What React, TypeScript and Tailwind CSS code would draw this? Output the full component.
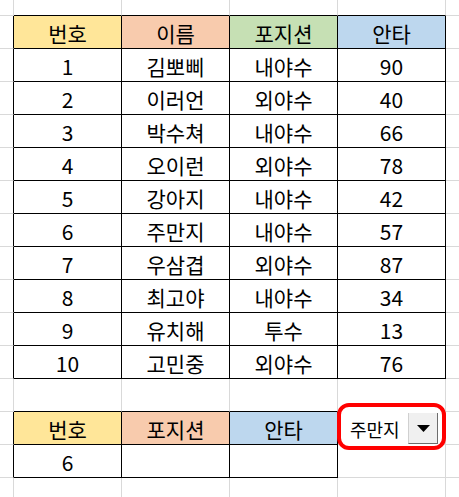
import React from "react";

const FONT = { fontFamily: '"Noto Sans CJK KR", "Noto Sans", sans-serif' };

type Cell = { text?: string; bg?: string };

// sheet rows; col 0 is the thin sliver left of the tables, col 5 is the sliver on the right
const players = [
  ["1", "김뽀삐", "내야수", "90"],
  ["2", "이러언", "외야수", "40"],
  ["3", "박수쳐", "내야수", "66"],
  ["4", "오이런", "외야수", "78"],
  ["5", "강아지", "내야수", "42"],
  ["6", "주만지", "내야수", "57"],
  ["7", "우삼겹", "외야수", "87"],
  ["8", "최고야", "내야수", "34"],
  ["9", "유치해", "투수", "13"],
  ["10", "고민중", "외야수", "76"],
];

const YELLOW = "bg-[#ffe699]";
const ORANGE = "bg-[#f8cbad]";
const GREEN = "bg-[#c6e0b4]";
const BLUE = "bg-[#bdd7ee]";

const rows: Cell[][] = [
  [],
  [
    { text: "번호", bg: YELLOW },
    { text: "이름", bg: ORANGE },
    { text: "포지션", bg: GREEN },
    { text: "안타", bg: BLUE },
  ],
  ...players.map((p) => p.map((t) => ({ text: t }))),
  [],
  [
    { text: "번호", bg: YELLOW },
    { text: "포지션", bg: ORANGE },
    { text: "안타", bg: BLUE },
  ],
  [{ text: "6" }, {}, {}],
  [],
];

// which cells belong to a bordered table
const inTable = (r: number, c: number) => {
  if (c < 1) return false;
  if (r >= 1 && r <= 11) return c <= 4;
  if (r === 13 || r === 14) return c <= 3;
  return false;
};

const colWidths = ["w-[14px]", "w-[108px]", "w-[108px]", "w-[108px]", "w-[108px]", "w-[40px]"];

const SheetCell: React.FC<{ r: number; c: number }> = ({ r, c }) => {
  const cell = c >= 1 && c <= 4 ? rows[r][c - 1] : undefined;
  const rightBlack = inTable(r, c) || inTable(r, c + 1);
  const bottomBlack = inTable(r, c) || inTable(r + 1, c);
  return (
    <div
      className={`flex-shrink-0 h-full flex items-center justify-center border-r border-b text-[21px] leading-none text-black pt-[2px] ${
        colWidths[c]
      } ${rightBlack ? "border-r-black" : "border-r-[#d9d9d9]"} ${
        bottomBlack ? "border-b-black" : "border-b-[#d9d9d9]"
      } ${cell?.bg ?? "bg-white"}`}
    >
      {cell?.text}
    </div>
  );
};

const App: React.FC = () => {
  return (
    <div className="relative w-[459px] h-[497px] overflow-hidden bg-white" style={FONT}>
      {rows.map((_, r) => (
        <div key={r} className={`flex ${r === 0 ? "h-[16px]" : "h-[33px]"}`}>
          {[0, 1, 2, 3, 4, 5].map((c) => (
            <SheetCell key={c} r={r} c={c} />
          ))}
        </div>
      ))}

      {/* combo box with red highlight */}
      <div className="absolute left-[337px] top-[403px] w-[109px] h-[47px] border-4 border-[#ff0000] rounded-[12px] bg-white pl-[4px] pt-[6px]">
        <div className="flex w-[93px] h-[31px] bg-white">
          <div className="flex-1 flex items-center pl-[5px] text-[18px] leading-none text-black">
            주만지
          </div>
          <div className="w-[30px] h-full flex items-center justify-center bg-[#f0f0f0] border-l border-l-[#d0d0d0] border-r border-r-[#6d6d6d] border-b border-b-[#6d6d6d]">
            <svg width="13" height="7" viewBox="0 0 13 7">
              <polygon points="0,0 13,0 6.5,7" fill="#000" />
            </svg>
          </div>
        </div>
      </div>
    </div>
  );
};

export default App;
